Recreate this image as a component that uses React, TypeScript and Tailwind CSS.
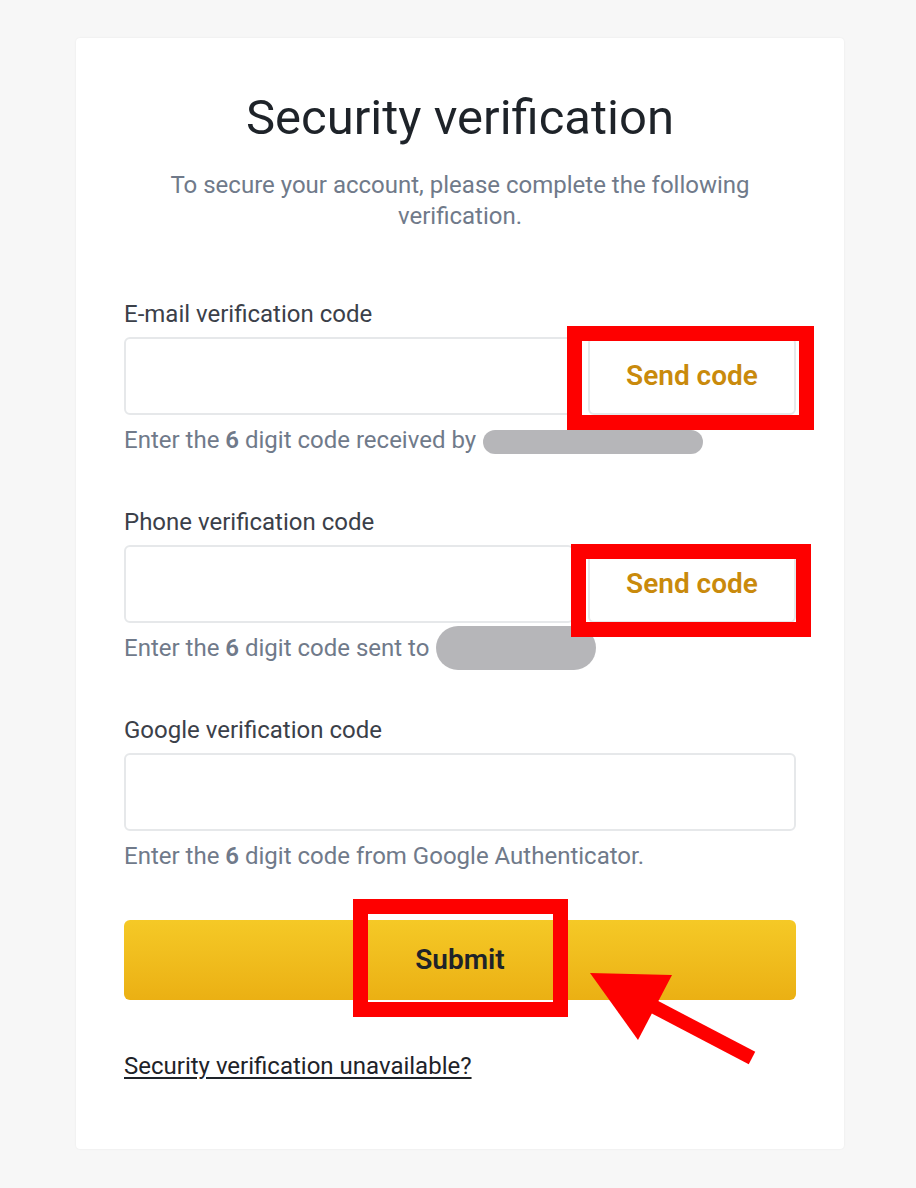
import React from "react";

const font = { fontFamily: "Roboto, 'Noto Sans', sans-serif" };

const Redact = ({ className }: { className: string }) => (
  <span
    className={`absolute rounded-full bg-[#b3b3b6] blur-[0.6px] opacity-95 ${className}`}
  />
);

const RedBox = ({ className }: { className: string }) => (
  <div
    className={`pointer-events-none absolute border-[15px] border-[#fe0000] ${className}`}
  />
);

const CodeField = ({
  label,
  withSend,
  help,
}: {
  label: string;
  withSend?: boolean;
  help: React.ReactNode;
}) => (
  <div>
    <div className="text-[24px] leading-[28px] text-[#3b4049]">{label}</div>
    <div className="mt-[9px] flex h-[78px] gap-[14px]">
      <div className="flex-1 rounded-[6px] border-2 border-[#e6e8ea] bg-white" />
      {withSend && (
        <button className="w-[208px] rounded-[6px] border-2 border-[#e6e8ea] bg-white text-[28px] font-semibold text-[#c98a0c]">
          Send code
        </button>
      )}
    </div>
    <div className="relative mt-[11px] text-[24px] leading-[28px] text-[#707a8a]">
      {help}
    </div>
  </div>
);

export default function App() {
  return (
    <div
      className="relative min-h-[1188px] bg-[#f7f7f7] pt-[38px] pb-[40px]"
      style={font}
    >
      <div className="relative ml-[76px] w-[768px] rounded-[4px] bg-white px-[48px] pt-[52px] pb-[68px] shadow-[0_0_2px_rgba(0,0,0,0.08)]">
        <h1 className="text-center text-[49px] leading-[56px] text-[#1e2329]">
          Security verification
        </h1>
        <p className="mx-auto mt-[24px] max-w-[620px] text-center text-[24px] leading-[31px] text-[#707a8a]">
          To secure your account, please complete the following verification.
        </p>

        <div className="relative mt-[68px]">
          <CodeField
            label="E-mail verification code"
            withSend
            help={
              <>
                Enter the <b className="font-semibold">6</b> digit code received by
                <Redact className="left-[359px] top-[4px] h-[24px] w-[220px]" />
              </>
            }
          />
          <RedBox className="left-[443px] top-[26px] h-[104px] w-[247px]" />
        </div>

        <div className="relative mt-[54px]">
          <CodeField
            label="Phone verification code"
            withSend
            help={
              <>
                Enter the <b className="font-semibold">6</b> digit code sent to
                <Redact className="left-[312px] top-[-8px] h-[44px] w-[160px]" />
              </>
            }
          />
          <RedBox className="left-[447px] top-[36px] h-[93px] w-[240px]" />
        </div>

        <div className="mt-[54px]">
          <CodeField
            label="Google verification code"
            help={
              <>
                Enter the <b className="font-semibold">6</b> digit code from Google
                Authenticator.
              </>
            }
          />
        </div>

        <div className="relative mt-[50px]">
          <button className="flex h-[80px] w-full items-center justify-center rounded-[6px] bg-gradient-to-b from-[#f5c926] to-[#ebb013] text-[28px] font-semibold text-[#1e2329]">
            Submit
          </button>
          <RedBox className="left-[229px] top-[-21px] h-[118px] w-[215px]" />
        </div>

        <a
          href="#"
          className="mt-[52px] inline-block text-[24px] leading-[28px] text-[#1e2329] underline underline-offset-[3px]"
        >
          Security verification unavailable?
        </a>
      </div>

      <svg
        className="pointer-events-none absolute left-0 top-0"
        width="916"
        height="1188"
      >
        <polygon points="590,973 672,975 638,1040" fill="#fe0000" />
        <line
          x1="645"
          y1="1002"
          x2="752"
          y2="1058"
          stroke="#fe0000"
          strokeWidth="14"
        />
      </svg>
    </div>
  );
}
